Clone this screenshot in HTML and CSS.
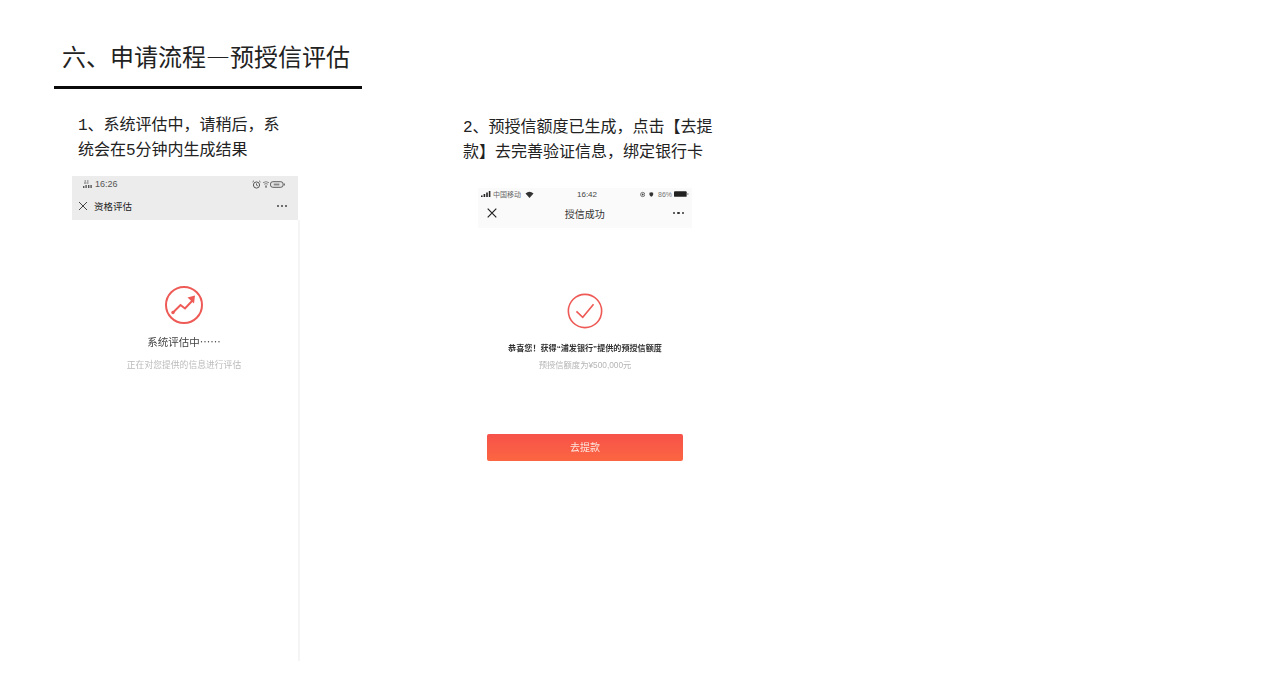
FILE: index.html
```html
<!DOCTYPE html>
<html lang="zh-CN">
<head>
<meta charset="utf-8">
<title>申请流程—预授信评估</title>
<link rel="stylesheet" href="styles.css">
</head>
<body>
<main class="slide">
  <header class="head">
    <h1 class="title">六、申请流程—预授信评估</h1>
  </header>
  <div class="steps">
    <section class="step step-one">
      <p class="step-text">1、系统评估中，请稍后，系<br>统会在5分钟内生成结果</p>
      <div class="phone phone-one">
        <div class="band">
          <div class="status">
            <div class="status-side">
              <svg class="i-sig-a" viewBox="0 0 10 8"><path d="M1 3h2.5M1.500 1h1.500M4 1h1.500M4 3h1.500" stroke="#666" stroke-width="1"/><path d="M0 8V6h1.400v2zM2.400 8V5h1.400v3zM5 8V5h1.400v3zM7.400 8V5h1.400v3z" fill="#555"/></svg>
              <span class="clock-a">16:26</span>
            </div>
            <div class="status-side status-right">
              <svg class="i-alarm" viewBox="0 0 9 9"><circle cx="4.500" cy="5" r="3.100" fill="none" stroke="#555" stroke-width="1"/><path d="M4.500 3.400V5.200L5.800 5.800M.5 2 2 .7M8.500 2 7 .7" fill="none" stroke="#555" stroke-width=".9"/></svg>
              <svg class="i-wifi-a" viewBox="0 0 7 8"><path d="M0 2.500Q3.500 0 7 2.500M1.300 4.300Q3.500 2.700 5.700 4.300M3 6h1v2H3z" fill="none" stroke="#777" stroke-width="1"/></svg>
              <svg class="i-batt-a" viewBox="0 0 16 7"><rect x=".5" y=".5" width="13.500" height="6" rx="2.500" fill="#e4e4e4" stroke="#555"/><path d="M4 2.500h6v2H4z" fill="#888"/><path d="M14.800 2.500h1v2h-1z" fill="#555"/></svg>
            </div>
          </div>
          <div class="nav-a">
            <svg class="i-x-a" viewBox="0 0 10 10"><path d="M1 1l8 8M9 1l-8 8" stroke="#444" stroke-width="1"/></svg>
            <span class="nav-a-title">资格评估</span>
            <span class="dots-a"><i></i><i></i><i></i></span>
          </div>
        </div>
        <div class="phone-body body-one">
          <svg class="ring" viewBox="0 0 40 40">
            <circle cx="20" cy="20" r="18" fill="none" stroke="#ee5a55" stroke-width="2"/>
            <path d="M9 27.500 16.500 20l4.500 3.500 7.500-8" fill="none" stroke="#ee5a55" stroke-width="2"/>
            <circle cx="9" cy="27.500" r="1.700" fill="#ee5a55"/>
            <path d="M23.500 12.500 31 10.500 30 18.500z" fill="#ee5a55"/>
          </svg>
          <p class="msg-a">系统评估中……</p>
          <p class="sub-a">正在对您提供的信息进行评估</p>
        </div>
      </div>
    </section>
    <section class="step step-two">
      <p class="step-text">2、预授信额度已生成，点击【去提款】去完善验证信息，绑定银行卡</p>
      <div class="phone phone-two">
        <div class="band-b">
          <div class="status-b">
            <div class="status-side">
              <svg class="i-sig-b" viewBox="0 0 10 6"><path d="M0 6V4.500h1.600V6zM2.600 6V3h1.600v3zM5.200 6V1.500h1.600V6zM7.800 6V0h1.600v6z" fill="#222"/></svg>
              <span class="carrier">中国移动</span>
              <svg class="i-wifi-b" viewBox="0 0 9 7"><path d="M.5 2.500Q4.500-.8 8.500 2.500L4.500 7z" fill="#333"/></svg>
            </div>
            <span class="clock-b">16:42</span>
            <div class="status-side status-right-b">
              <svg class="i-lock" viewBox="0 0 7 7"><circle cx="3.500" cy="3.500" r="2.800" fill="none" stroke="#444" stroke-width=".9"/><circle cx="3.500" cy="3.500" r="1.300" fill="#444"/></svg>
              <svg class="i-shield" viewBox="0 0 7 7"><path d="M.7.800 3.500 0 6.300.800V4Q5.500 6 3.500 7 1.500 6 .7 4z" fill="#333"/></svg>
              <span class="pct">86%</span>
              <svg class="i-batt-b" viewBox="0 0 16 6"><rect width="13.500" height="6" rx="1" fill="#222"/><path d="M14.300 2h1v2h-1z" fill="#888"/></svg>
            </div>
          </div>
          <div class="nav-b">
            <svg class="i-x-b" viewBox="0 0 10 10"><path d="M.7.700l8.600 8.600M9.300.700.7 9.300" stroke="#222" stroke-width="1.200"/></svg>
            <span class="nav-b-title">授信成功</span>
            <span class="dots-b"><i></i><i></i><i></i></span>
          </div>
        </div>
        <div class="phone-body body-two">
          <svg class="ring ring-b" viewBox="0 0 40 40">
            <circle cx="20" cy="20" r="18.500" fill="none" stroke="#ee5a55" stroke-width="1.800"/>
            <path d="M10.500 20.500 17.500 27 29.500 12.500" fill="none" stroke="#ee5a55" stroke-width="1.800"/>
          </svg>
          <p class="msg-b">恭喜您！获得“浦发银行”提供的预授信额度</p>
          <p class="sub-b">预授信额度为¥500,000元</p>
          <div class="btn">去提款</div>
        </div>
      </div>
    </section>
  </div>
</main>
</body>
</html>
```
FILE: styles.css
```css
* { box-sizing: border-box; }
html, body { margin: 0; padding: 0; background: #fff; }
body {
  width: 1277px;
  height: 679px;
  overflow: hidden;
  font-family: "Liberation Sans", "Noto Sans CJK SC", sans-serif;
  color: #111;
}
p, h1 { margin: 0; }
.slide { display: flex; flex-direction: column; height: 100%; padding-left: 54px; }

.head { width: 308px; height: 89px; padding: 39px 0 0 8px; border-bottom: 3px solid #0a0a0a; }
.title { font-size: 24px; line-height: 33px; font-weight: 400; white-space: nowrap; color: #222; font-family: "Noto Sans CJK SC", serif; }

.steps { display: flex; align-items: flex-start; padding-left: 18px; }
.step-one { width: 228px; margin-right: 163px; padding-top: 25px; }
.step-two { width: 250px; padding-top: 27px; }
.step-text { font-size: 16px; line-height: 25px; font-family: "Liberation Mono", "Noto Sans CJK SC", monospace; color: #222; }
.step-one .step-text { padding-left: 6px; width: 212px; height: 50px; white-space: nowrap; margin-bottom: 12px; }
.step-two .step-text { margin-bottom: 22px; }

.phone { filter: blur(.3px); }
.phone-one { width: 226px; height: 485px; }
.phone-two { width: 214px; margin-left: 15px; }

/* first phone */
.band { background: #ececec; height: 44px; }
.status { display: flex; justify-content: space-between; align-items: center; height: 16px; padding: 0 13px 0 11px; }
.status-side { display: flex; align-items: center; }
.i-sig-a { width: 10px; height: 8px; margin-right: 2px; }
.clock-a { font-size: 9px; color: #555; }
.i-alarm { width: 9px; height: 9px; margin-right: 1.500px; }
.i-wifi-a { width: 6px; height: 8px; margin-right: 1.500px; }
.i-batt-a { width: 15px; height: 7px; }
.nav-a { display: flex; align-items: center; height: 28px; padding: 0 11px 0 6px; }
.i-x-a { width: 10px; height: 10px; }
.nav-a-title { font-size: 9.500px; margin-left: 6px; flex: 1; color: #222; }
.dots-a { display: flex; gap: 2px; }
.dots-a i { width: 2px; height: 2px; border-radius: 50%; background: #444; }
.body-one { width: 228px; height: 441px; border-right: 2px solid #f5f5f5; padding: 65px 2px 0 0; text-align: center; }
.ring { display: block; width: 40px; height: 40px; margin: 0 auto; }
.ring-b { width: 36px; height: 36px; }
.msg-a { font-family: "Noto Sans CJK SC", sans-serif; font-size: 10.500px; line-height: 14px; margin-top: 10px; color: #444; }
.sub-a { font-size: 8.800px; line-height: 12px; margin-top: 10px; color: #bbb; }

/* second phone */
.band-b { background: #fafafa; height: 40px; }
.status-b { display: flex; justify-content: space-between; align-items: center; height: 12px; padding: 0 3px; }
.i-sig-b { width: 10px; height: 6px; margin-right: 2px; }
.carrier { font-size: 7px; color: #666; margin-right: 4px; }
.i-wifi-b { width: 9px; height: 7px; }
.clock-b { font-size: 8px; color: #444; }
.status-right-b { width: 49px; }
.i-lock { width: 7px; height: 7px; margin-right: 4px; }
.i-shield { width: 6px; height: 7px; margin-right: 4px; }
.pct { font-size: 7px; color: #777; margin-right: 2px; white-space: nowrap; }
.i-batt-b { width: 15px; height: 6px; flex: none; }
.nav-b { display: flex; align-items: center; justify-content: space-between; height: 28px; padding: 0 8px 2px 9px; }
.i-x-b { width: 10px; height: 10px; }
.nav-b-title { font-size: 10px; color: #333; }
.dots-b { display: flex; gap: 2px; }
.dots-b i { width: 2.500px; height: 2.500px; border-radius: 50%; background: #333; }
.body-two { padding-top: 65px; text-align: center; }
.msg-b { font-size: 8.100px; line-height: 12px; margin-top: 14px; font-weight: 700; color: #333; white-space: nowrap; }
.sub-b { font-size: 8.300px; line-height: 12px; margin-top: 4px; color: #b5b5b5; }
.btn { width: 196px; height: 27px; margin: 63px 0 0 9px; border-radius: 2px; background: linear-gradient(#f7524a, #fb6641); color: #fde4dc; font-size: 10px; line-height: 27px; text-align: center; }
```
